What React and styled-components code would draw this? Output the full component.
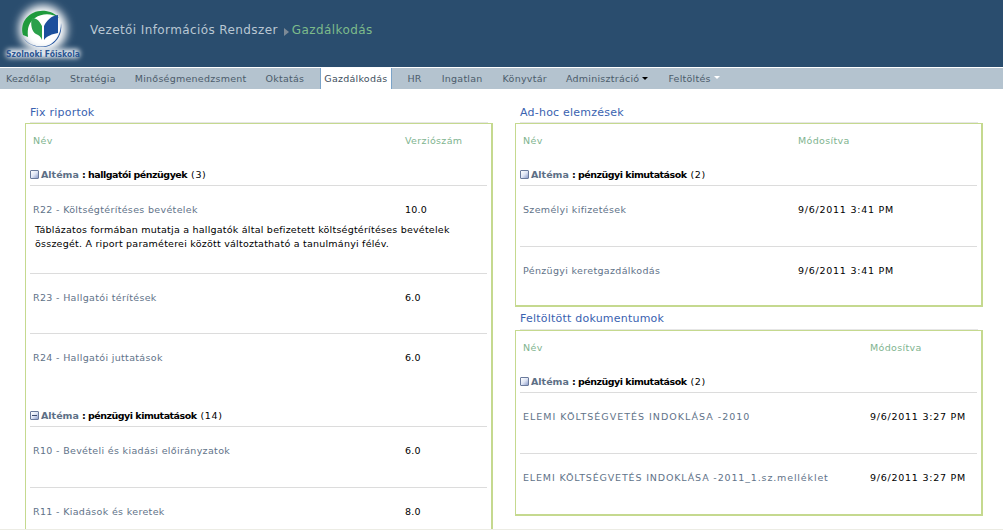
import React from 'react';
import styled, { createGlobalStyle } from 'styled-components';

const FONT = '"DejaVu Sans", Verdana, sans-serif';

const GlobalStyle = createGlobalStyle`
    html, body {
        margin: 0;
        padding: 0;
        height: 530px;
        overflow: hidden;
        background: #fff;
        font-family: ${FONT};
        font-size: 10px;
    }
`;

const Page = styled.div`
    width: 1003px;
    height: 530px;
    overflow: hidden;
    position: relative;
    display: flex;
    flex-direction: column;
`;

const Banner = styled.header`
    height: 67px;
    flex: none;
    background: #2a4d6e;
    display: flex;
    align-items: flex-start;
`;
const LogoWrap = styled.div`
    width: 90px;
    height: 67px;
    flex: none;
`;
const SiteTitle = styled.div`
    display: flex;
    align-items: center;
    height: 60px;
    font-size: 12px;
    letter-spacing: 0.4px;
`;
const SiteName = styled.span`
    color: #b9c7d3;
`;
const Crumb = styled.span`
    color: #7dbb8b;
`;
const CrumbArrow = styled.svg`
    width: 7px;
    height: 8px;
    margin: 3px 2px 0 5px;
`;

const Nav = styled.nav`
    height: 21px;
    flex: none;
    margin-top: 1px;
    background: #b4c3cf;
    display: flex;
    align-items: stretch;
    padding-left: 6px;
`;
const NavItem = styled.a`
    display: flex;
    align-items: center;
    gap: 3px;
    margin-right: ${props => props.$gap}px;
    font-size: 9.5px;
    letter-spacing: 0.25px;
    color: ${props => props.$active ? '#3f5060' : '#4c5c6b'};
    ${props => props.$active && `
        background: #fff;
        border-left: 1px solid #7ba3c8;
        border-right: 1px solid #7ba3c8;
        padding: 0 4px 0 3px;
    `}
`;
const Caret = styled.span`
    width: 0;
    height: 0;
    border-left: 3px solid transparent;
    border-right: 3px solid transparent;
    border-top: 3px solid ${props => props.$light ? '#fff' : '#000'};
    margin-bottom: ${props => props.$light ? '3px' : '0'};
`;

const Content = styled.main`
    flex: 1;
    display: grid;
    grid-template-columns: 468px 468px;
    column-gap: 22px;
    padding: 12px 0 0 25px;
    align-items: start;
    min-height: 0;
`;
const Column = styled.div`
    display: flex;
    flex-direction: column;
`;
const PanelTitle = styled.h2`
    margin: 0 5px;
    height: ${props => props.$tall ? 22 : 21}px;
    line-height: 23px;
    font-weight: normal;
    font-size: 11px;
    letter-spacing: 0.22px;
    color: #3a62b0;
    border-bottom: 1px solid #e6e6e6;
    box-sizing: content-box;
`;
const PanelBox = styled.section`
    border: 1px solid #c5d98f;
    border-width: 1px 2px 2px 1px;
    padding: 0 4px;
    box-sizing: border-box;
    width: 468px;
    height: ${props => props.$height}px;
`;
const HeadRow = styled.div`
    display: grid;
    grid-template-columns: ${props => props.$valueAt}px 1fr;
    height: 32px;
    box-sizing: border-box;
    padding-left: 3px;
    align-items: center;
    color: #80b48f;
    font-size: 9.5px;
    letter-spacing: 0.35px;
`;
const GroupRow = styled.div`
    height: ${props => props.$height || 30}px;
    display: flex;
    align-items: flex-end;
    padding-bottom: 3px;
    box-sizing: border-box;
    border-bottom: 1px solid #dcdcdc;
    font-size: 9.5px;
    line-height: 14px;
    color: #000;
    white-space: nowrap;
`;
const GroupIcon = styled.span`
    width: 7px;
    height: 7px;
    margin: 0 2px 3px 0;
    flex: none;
    border: 1px solid #6a7a9c;
    border-radius: 1px;
    background: linear-gradient(135deg, #fff 0%, #dfe5f4 50%, #8d9dcb 100%);
    box-sizing: content-box;
    display: flex;
    align-items: center;
    justify-content: center;
    &::after {
        content: '';
        display: ${props => props.$open ? 'block' : 'none'};
        width: 5px;
        height: 1px;
        background: #3c4c70;
    }
`;
const GroupLabel = styled.b`
    color: #5d7086;
    margin-right: 3px;
`;
const GroupName = styled.b`
    color: #000;
    margin-right: 4px;
    letter-spacing: -0.5px;
`;
const GroupCount = styled.span`
    letter-spacing: 0.6px;
`;
const ItemRow = styled.div`
    height: ${props => props.$height}px;
    box-sizing: border-box;
    padding-top: 17px;
    border-bottom: ${props => props.$last ? 'none' : '1px solid #dcdcdc'};
`;
const ItemLine = styled.div`
    display: grid;
    grid-template-columns: ${props => props.$valueAt}px 1fr;
    padding-left: 3px;
    height: 14px;
    line-height: 14px;
    font-size: 9.5px;
    white-space: nowrap;
`;
const ItemName = styled.a`
    color: #5f7389;
    letter-spacing: ${props => props.$spacing || 0.33}px;
`;
const ItemValue = styled.span`
    color: #000;
    letter-spacing: ${props => props.$spacing}px;
`;
const ItemDesc = styled.p`
    margin: 6px 0 0 5px;
    width: 440px;
    font-size: 9.5px;
    line-height: 14px;
    letter-spacing: 0.23px;
    color: #000;
`;
const FooterLine = styled.div`
    position: absolute;
    left: 0;
    right: 0;
    bottom: 0;
    height: 1px;
    background: #ecece4;
`;

const Logo = () => (
    <svg width="90" height="67" viewBox="0 0 90 67">
        <defs>
            <filter id="soft" x="-30%" y="-30%" width="160%" height="160%">
                <feGaussianBlur stdDeviation="4" />
            </filter>
            <filter id="softer" x="-20%" y="-60%" width="140%" height="220%">
                <feGaussianBlur stdDeviation="2.5" />
            </filter>
        </defs>
        <ellipse cx="43" cy="29" rx="24" ry="24" fill="#fff" filter="url(#soft)" />
        <rect x="6" y="49" width="74" height="9" rx="4" fill="#e4eaf1" filter="url(#softer)" />
        <path d="M23 35C19 21 31 9 46 11C52 12 57 15 59 18C52 13 42 13 35 18C29 22 27 28 28 37Z" fill="#1f9a3c" />
        <path d="M21 33C25 45 40 50 51 44C57 40 61 33 61 23C63 35 55 46 44 47C33 48 24 42 21 33Z" fill="#1c4f9c" />
        <path d="M42 26C39 20 36 18 32 18C30 24 32 32 36 34C39 35 41 37 42 40Z" fill="#2aa04a" />
        <path d="M44 26C47 20 51 16 58 15L58 33C52 34 47 36 44 40Z" fill="#1c4f9c" />
        <text x="6" y="56.5" fontFamily={FONT} fontSize="8" fontWeight="bold" fill="#2b5592" textLength="74" lengthAdjust="spacingAndGlyphs">Szolnoki Főiskola</text>
    </svg>
);

const navItems = [
    { label: 'Kezdőlap', gap: 19 },
    { label: 'Stratégia', gap: 19 },
    { label: 'Minőségmenedzsment', gap: 19 },
    { label: 'Oktatás', gap: 16 },
    { label: 'Gazdálkodás', gap: 15, active: true },
    { label: 'HR', gap: 20 },
    { label: 'Ingatlan', gap: 20 },
    { label: 'Könyvtár', gap: 19 },
    { label: 'Adminisztráció', gap: 20, caret: 'dark' },
    { label: 'Feltöltés', gap: 0, caret: 'light' },
];

const Group = ({ open, name, count, height }) => (
    <GroupRow $height={height}>
        <GroupIcon $open={open} />
        <GroupLabel>Altéma</GroupLabel>
        <GroupName>: {name}</GroupName>
        <GroupCount>({count})</GroupCount>
    </GroupRow>
);

const Item = ({ name, value, valueAt, height, last, spacing, valueSpacing = 0.25, children }) => (
    <ItemRow $height={height} $last={last}>
        <ItemLine $valueAt={valueAt}>
            <ItemName $spacing={spacing}>{name}</ItemName>
            <ItemValue $spacing={valueSpacing}>{value}</ItemValue>
        </ItemLine>
        {children}
    </ItemRow>
);

export default function App() {
    return (
        <Page>
            <GlobalStyle />
            <Banner>
                <LogoWrap><Logo /></LogoWrap>
                <SiteTitle>
                    <SiteName>Vezetői Információs Rendszer</SiteName>
                    <CrumbArrow viewBox="0 0 7 8"><path d="M1 0L6 4L1 8Z" fill="#7d8a96" /></CrumbArrow>
                    <Crumb>Gazdálkodás</Crumb>
                </SiteTitle>
            </Banner>
            <Nav>
                {navItems.map(item => (
                    <NavItem key={item.label} $gap={item.gap} $active={item.active}>
                        {item.label}
                        {item.caret && <Caret $light={item.caret === 'light'} />}
                    </NavItem>
                ))}
            </Nav>
            <Content>
                <Column>
                    <PanelTitle>Fix riportok</PanelTitle>
                    <PanelBox $height={420}>
                        <HeadRow $valueAt={372}><span>Név</span><span>Verziószám</span></HeadRow>
                        <Group name="hallgatói pénzügyek" count={3} />
                        <Item name="R22 - Költségtérítéses bevételek" value="10.0" valueAt={372} height={88}>
                            <ItemDesc>Táblázatos formában mutatja a hallgatók által befizetett költségtérítéses bevételek összegét. A riport paraméterei között változtatható a tanulmányi félév.</ItemDesc>
                        </Item>
                        <Item name="R23 - Hallgatói térítések" value="6.0" valueAt={372} height={60} />
                        <Item name="R24 - Hallgatói juttatások" value="6.0" valueAt={372} height={59} last />
                        <Group open name="pénzügyi kimutatások" count={14} height={34} />
                        <Item name="R10 - Bevételi és kiadási előirányzatok" value="6.0" valueAt={372} height={61} />
                        <Item name="R11 - Kiadások és keretek" value="8.0" valueAt={372} height={40} last />
                    </PanelBox>
                </Column>
                <Column>
                    <PanelTitle>Ad-hoc elemzések</PanelTitle>
                    <PanelBox $height={184}>
                        <HeadRow $valueAt={275}><span>Név</span><span>Módosítva</span></HeadRow>
                        <Group name="pénzügyi kimutatások" count={2} />
                        <Item name="Személyi kifizetések" value="9/6/2011 3:41 PM" valueAt={275} valueSpacing={0.75} height={61} />
                        <Item name="Pénzügyi keretgazdálkodás" value="9/6/2011 3:41 PM" valueAt={275} valueSpacing={0.75} height={49} last />
                    </PanelBox>
                    <PanelTitle $tall>Feltöltött dokumentumok</PanelTitle>
                    <PanelBox $height={186}>
                        <HeadRow $valueAt={347}><span>Név</span><span>Módosítva</span></HeadRow>
                        <Group name="pénzügyi kimutatások" count={2} height={30} />
                        <Item name="ELEMI KÖLTSÉGVETÉS INDOKLÁSA -2010" value="9/6/2011 3:27 PM" valueAt={347} valueSpacing={0.75} spacing={1} height={61} />
                        <Item name="ELEMI KÖLTSÉGVETÉS INDOKLÁSA -2011_1.sz.melléklet" value="9/6/2011 3:27 PM" valueAt={347} valueSpacing={0.75} spacing={0.85} height={50} last />
                    </PanelBox>
                </Column>
            </Content>
            <FooterLine />
        </Page>
    );
}
